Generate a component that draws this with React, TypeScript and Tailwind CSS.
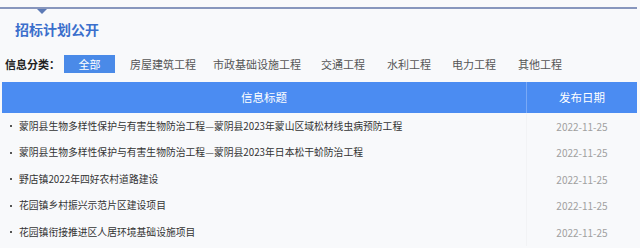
import React from 'react';

const categories = [
  { name: '房屋建筑工程', gap: 'ml-[15px]' },
  { name: '市政基础设施工程', gap: 'ml-[17px]' },
  { name: '交通工程', gap: 'ml-[20px]' },
  { name: '水利工程', gap: 'ml-[22px]' },
  { name: '电力工程', gap: 'ml-[21px]' },
  { name: '其他工程', gap: 'ml-[22px]' },
];

const rows = [
  { title: '蒙阴县生物多样性保护与有害生物防治工程—蒙阴县2023年蒙山区域松材线虫病预防工程', date: '2022-11-25' },
  { title: '蒙阴县生物多样性保护与有害生物防治工程—蒙阴县2023年日本松干蚧防治工程', date: '2022-11-25' },
  { title: '野店镇2022年四好农村道路建设', date: '2022-11-25' },
  { title: '花园镇乡村振兴示范片区建设项目', date: '2022-11-25' },
  { title: '花园镇衔接推进区人居环境基础设施项目', date: '2022-11-25' },
];

export default function App() {
  return (
    <div className="w-[640px] h-[248px] overflow-hidden bg-[#f8f9fb] font-['Noto_Sans_CJK_SC','Noto_Sans',sans-serif]">
      {/* Top rule with marker */}
      <div className="h-[7px]" />
      <div className="h-[2px] w-[637px] bg-[#8796bd]" />
      <div className="ml-[37px] w-0 h-0 border-l-[5px] border-r-[5px] border-t-[5px] border-l-transparent border-r-transparent border-t-[#5c7ab6]" />

      {/* Title */}
      <div className="h-[29px] flex items-center pl-[15px]">
        <h2 className="text-[14px] leading-none font-bold text-[#3b6fcc]">招标计划公开</h2>
      </div>

      {/* Category filter */}
      <div className="mt-[12px] h-[18px] flex items-center pl-[5px] text-[11px] leading-none">
        <span className="font-bold text-[#222]">信息分类：</span>
        <span className="ml-[4px] w-[51px] h-[18px] flex items-center justify-center bg-[#4a8ae8] text-white">全部</span>
        {categories.map((c) => (
          <span key={c.name} className={`${c.gap} text-[#555]`}>{c.name}</span>
        ))}
      </div>

      {/* Table */}
      <div className="mt-[9px] ml-[2px] w-[635px]">
        <div className="h-[31px] flex bg-[#4b8cf2] text-white text-[11.5px]">
          <div className="w-[525px] flex items-center justify-center border-r border-[#79a9f6]">信息标题</div>
          <div className="flex-1 flex items-center justify-center">发布日期</div>
        </div>
        {rows.map((r, i) => (
          <div key={i} className="h-[26.5px] flex text-[9.8px]">
            <div className="w-[525px] flex items-center pl-[8px] text-[#333] border-r border-[#f2f3f5]">
              <span className="w-[2px] h-[2px] bg-[#555] mr-[7px]" />
              <span className="whitespace-nowrap">{r.title}</span>
            </div>
            <div className="flex-1 flex items-center justify-center text-[#a0a0a0] text-[10px]">{r.date}</div>
          </div>
        ))}
      </div>
    </div>
  );
}
